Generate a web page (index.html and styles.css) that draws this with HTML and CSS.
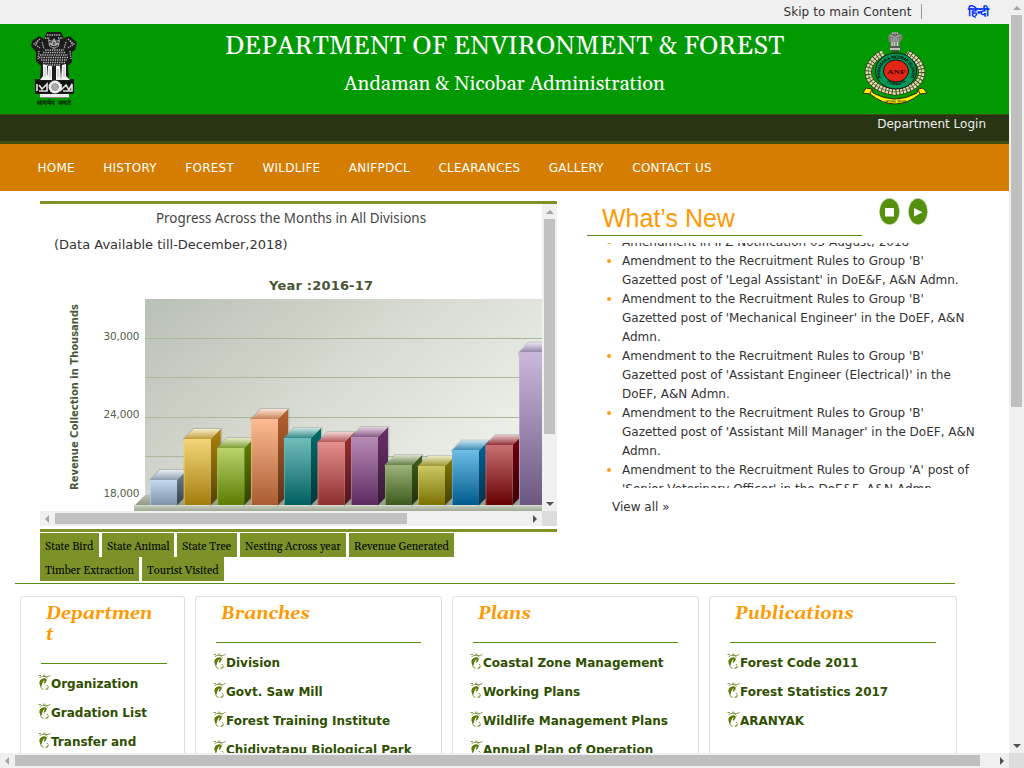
FILE: index.html
```html
<!DOCTYPE html>
<html lang="en">
<head>
<meta charset="utf-8">
<title>Department of Environment &amp; Forest</title>
<link rel="stylesheet" href="styles.css">
</head>
<body>
<svg class="defs" width="0" height="0" aria-hidden="true">
  <symbol id="leaf" viewBox="0 0 13 17">
    <path d="M.5 1.500H3M5 1.200H7.500M7 2.500Q10 3 12.500 1.500M1.500 3.800Q4 1.500 7 2.600 9 3.200 9.500 4.500" fill="none" stroke="#8c9a52" stroke-width="1"/>
    <path d="M2.800 9C2 12 3 14.500 5.500 15.500M7.500 15.500Q10.500 15 10.300 12.500M8.800 11.500H10" fill="none" stroke="#8c9a3c" stroke-width="1.100"/>
    <path d="M3.500 12.500C0 10 .8 5 6 4.300 9.500 4 9.800 7 6.500 9.800L5.500 9C7.500 6.500 6.500 5.500 5 8 4 9.800 4 11 3.500 12.500Z" fill="#5d7a08"/>
  </symbol>
  <symbol id="lions" viewBox="0 0 48 75">
    <path d="M17 1H31L34 7 40 5 47 12 45 19 42 21 42 31 38 35 39 48H44V63H39V67H10V63H5V48H10L11 35 6 30 6 21 1 15 2 10 9 5 14 8Z" fill="#1c1c1c"/>
    <g fill="none" stroke="#b4b4b4" stroke-width="1.300" stroke-dasharray="1.400 .9">
      <path d="M17 4H31M15 7H20M28 7H33M10 8L4 13 10 17M38 8L44 13 38 17M12 11L14 18M36 11L34 18M8 10L6 14M40 10L43 14M15 19H34M13 21.500H36M10 24H38M9 26.500H39M11 29H37M13 31.500H36M17 34H31M9 20L8 28M40 20L41 28"/>
    </g>
    <path d="M18 8L22 10 24 7 26 10 30 8 29 15 24 18 19 15Z" fill="#a8a8a8"/><path d="M19 11H22M26 11H29M20 14Q24 18 28 14M24 11V14" stroke="#111" fill="none"/>
    <path d="M13 33L17 34 17 44 19 49H10L13 45ZM18 35H22L22 49H17ZM26 35H30L31 49H26ZM32 34L36 33 36 45 40 49H31Z" fill="#f2f2f2"/>
    <path d="M15 36V46M34 36V46M20 38V46M28 38V46" stroke="#bbb"/>
    <rect x="5" y="50" width="39" height="12" rx="2" fill="#111"/>
    <path d="M7 53V60M9 54L12 58 17 53V60H9M31 53V59L36 54 39 59 42 53V60H33" fill="none" stroke="#ddd" stroke-width="1.700"/>
    <circle cx="25" cy="56" r="6.500" fill="#eee"/><circle cx="25" cy="56" r="3.500" fill="#aaa" stroke="#777" stroke-dasharray="1 1"/>
    <rect x="10" y="63" width="29" height="3.500" fill="#eee"/>
  </symbol>
  <symbol id="capital" viewBox="0 0 16 22">
    <path d="M5 1H11L12 3 15 3 15.500 7 14 10 12 12 13 15V20H3V15L4 12 1.500 10 1 6 2 3 4 3Z" fill="#777d75"/>
    <path d="M5 2H11M3 5H6M10 5H13M6 5L8 7 10 5M4 8H12M4 10H12" fill="none" stroke="#c4c4be" stroke-dasharray="1.500 .8"/>
    <path d="M5 11V15M7.500 11V15M10.500 11V15M3 18H13" stroke="#d8d8d0" stroke-width="1.300"/>
    <path d="M3 16H13M4 20H12M6 4H7M9 4H10" stroke="#333"/>
  </symbol>
</svg>

<div class="window">
  <div class="page">
    <div class="topbar"><a class="skip">Skip to main Content</a><a class="hindi">हिन्दी</a></div>
    <header class="banner">
      <svg class="emblem" width="50" height="78" viewBox="0 0 50 78">
        <use href="#lions" x="0" y="0" width="48" height="75"/>
        <text x="7" y="74" textLength="34" lengthAdjust="spacingAndGlyphs" font-size="6.500" font-weight="bold" fill="#0a200a">सत्यमेव जयते</text>
      </svg>
      <div class="titles"><h1>DEPARTMENT OF ENVIRONMENT &amp; FOREST</h1><h2>Andaman &amp; Nicobar Administration</h2></div>
      <svg class="crest" width="66" height="75" viewBox="0 0 66 75">
        <use href="#capital" x="25" y="0" width="16" height="22"/>
        <path d="M21 22C-2 34 2 58 33 61C64 58 68 34 45 22" fill="none" stroke="#32401f" stroke-width="7"/>
        <path d="M21 22C-2 34 2 58 33 61C64 58 68 34 45 22" fill="none" stroke="#e0dcae" stroke-width="5.500" stroke-dasharray="2.600 .9"/>
        <path d="M21 22C-2 34 2 58 33 61C64 58 68 34 45 22" fill="none" stroke="#5b6238" stroke-width=".8"/>
        <ellipse cx="34" cy="40" rx="20.500" ry="18" fill="#00965a" stroke="#101810"/>
        <ellipse cx="34" cy="40" rx="12.500" ry="11" fill="#e32615" stroke="#101810"/>
        <path id="arc" d="M19 47A16 14.500 0 1 1 49 47" fill="none"/>
        <path id="low" d="M20 46A16 15.500 0 0 0 48 46" fill="none"/>
        <text font-size="4.200" font-weight="bold" fill="#062010"><textPath href="#arc" textLength="58">ANDAMAN &amp; NICOBAR ISLANDS</textPath></text>
        <text font-size="4" font-weight="bold" fill="#062010"><textPath href="#low" startOffset="7">FORESTS</textPath></text>
        <text x="25" y="42.500" textLength="18.500" lengthAdjust="spacingAndGlyphs" font-family="Liberation Serif" font-size="7" font-weight="bold" fill="#300">ANF</text>
        <path d="M.8 62L4 57 10 58 11 62Q33 74 55 62L56 58 61 57 65 62 58 63Q33 83 8 63Z" fill="#ffed00" stroke="#332c00"/>
        <path d="M10 58L8 63M56 58L58 63" stroke="#332c00"/>
        <text x="23" y="71.500" font-size="4.500" textLength="21" lengthAdjust="spacingAndGlyphs" fill="#222">अरण्यमेव जीवनम्</text>
      </svg>
    </header>
    <div class="login"><a>Department Login</a></div>
    <nav class="menu"><a>HOME</a><a>HISTORY</a><a>FOREST</a><a>WILDLIFE</a><a>ANIFPDCL</a><a>CLEARANCES</a><a>GALLERY</a><a>CONTACT US</a></nav>

    <main class="main">
      <section class="stats">
        <div class="frame">
          <div class="pane">
            <h3>Progress Across the Months in All Divisions</h3>
            <p class="avail">(Data Available till-December,2018)</p>
            <svg class="chart" id="chart" width="502" height="241" viewBox="40 270 502 241">
              <defs>
                <linearGradient id="wall" x1="0" y1="0" x2="1" y2=".6"><stop offset="0" stop-color="#b9c0b5"/><stop offset=".5" stop-color="#d5d9cf"/><stop offset="1" stop-color="#edf0ea"/></linearGradient>
                <linearGradient id="slab" x1="0" y1="0" x2="0" y2="1"><stop offset="0" stop-color="#cbd2c3"/><stop offset="1" stop-color="#a0a994"/></linearGradient>
                <linearGradient id="floor" x1="0" y1="0" x2="0" y2="1"><stop offset="0" stop-color="#b8bfb1"/><stop offset="1" stop-color="#8e967f"/></linearGradient>
              </defs>
              <text class="year" x="269" y="290" textLength="104">Year :2016-17</text>
              <text class="axis" transform="translate(77.500 490) rotate(-90)" textLength="186" lengthAdjust="spacingAndGlyphs">Revenue Collection in Thousands</text>
              <g class="tick"><text x="103.500" y="340" textLength="36">30,000</text><text x="103.500" y="418" textLength="36">24,000</text><text x="103.500" y="497" textLength="36">18,000</text></g>
              <rect x="145" y="299" width="397" height="197" fill="url(#wall)"/>
              <path d="M145 338.500H542M145 377.500H542M145 417.500H542M145 456.500H542" stroke="#a9b998"/>
              <path d="M145 495H542V506H134Z" fill="url(#floor)"/>
              <rect x="134" y="505" width="408" height="6" fill="url(#slab)"/>
              <path d="M134 505.500H542" stroke="#d8ddd2"/>
              <g id="bars"></g>
            </svg>
          </div>
          <div class="vbar"><i class="up off"></i><b></b><i class="down"></i></div>
          <div class="hbar"><i class="left off"></i><b></b><i class="right"></i></div>
          <div class="corner"></div>
        </div>
        <div class="tabs"><a style="width:59px">State Bird</a><a style="width:72px">State Animal</a><a style="width:60px">State Tree</a><a style="width:106px">Nesting Across year</a><a style="width:105px">Revenue Generated</a><a style="width:99px">Timber Extraction</a><a style="width:82px">Tourist Visited</a></div>
      </section>
      <section class="news">
        <div class="newshead">
          <h2>What’s New</h2>
          <svg class="controls" width="50" height="28" viewBox="0 0 50 28"><g fill="#56900f" stroke="#b9d094" stroke-width=".8" stroke-dasharray="1.500 1"><ellipse cx="10.500" cy="13.500" rx="10" ry="13"/><ellipse cx="39" cy="13.500" rx="9.500" ry="13"/></g><path d="M6 10H15V18.500H6ZM35 10L43.500 14.200 35 18.500Z" fill="#fff"/></svg>
        </div>
        <div class="ticker"><ul>
          <li>Amendment in IPZ Notification 05 August, 2018</li>
          <li>Amendment to the Recruitment Rules to Group 'B'<br>Gazetted post of 'Legal Assistant' in DoE&amp;F, A&amp;N Admn.</li>
          <li>Amendment to the Recruitment Rules to Group 'B'<br>Gazetted post of 'Mechanical Engineer' in the DoEF, A&amp;N<br>Admn.</li>
          <li>Amendment to the Recruitment Rules to Group 'B'<br>Gazetted post of 'Assistant Engineer (Electrical)' in the<br>DoEF, A&amp;N Admn.</li>
          <li>Amendment to the Recruitment Rules to Group 'B'<br>Gazetted post of 'Assistant Mill Manager' in the DoEF, A&amp;N<br>Admn.</li>
          <li>Amendment to the Recruitment Rules to Group 'A' post of<br>'Senior Veterinary Officer' in the DoE&amp;F, A&amp;N Admn.</li>
        </ul></div>
        <a class="viewall">View all »</a>
      </section>
    </main>
    <section class="cards">
      <article><h2>Departmen<br>t</h2><ul><li><svg><use href="#leaf"/></svg>Organization</li><li><svg><use href="#leaf"/></svg>Gradation List</li><li><svg><use href="#leaf"/></svg>Transfer and</li></ul></article>
      <article><h2>Branches</h2><ul><li><svg><use href="#leaf"/></svg>Division</li><li><svg><use href="#leaf"/></svg>Govt. Saw Mill</li><li><svg><use href="#leaf"/></svg>Forest Training Institute</li><li><svg><use href="#leaf"/></svg>Chidiyatapu Biological Park</li></ul></article>
      <article><h2>Plans</h2><ul><li><svg><use href="#leaf"/></svg>Coastal Zone Management</li><li><svg><use href="#leaf"/></svg>Working Plans</li><li><svg><use href="#leaf"/></svg>Wildlife Management Plans</li><li><svg><use href="#leaf"/></svg>Annual Plan of Operation</li></ul></article>
      <article><h2>Publications</h2><ul><li><svg><use href="#leaf"/></svg>Forest Code 2011</li><li><svg><use href="#leaf"/></svg>Forest Statistics 2017</li><li><svg><use href="#leaf"/></svg>ARANYAK</li></ul></article>
    </section>
  </div>
  <div class="vbar page-v"><i class="up off"></i><b></b><i class="down"></i></div>
  <div class="hbar page-h"><i class="left off"></i><b></b><i class="right"></i></div>
  <div class="corner"></div>
</div>
<script src="chart.js"></script>
</body>
</html>
```
FILE: styles.css
```css
* { box-sizing: border-box; }
body { margin: 0; font: 12px/19px Verdana, "DejaVu Sans", sans-serif; color: #333; background: #fff; overflow: hidden; }
h1, h2, h3, p, ul { margin: 0; padding: 0; font-weight: normal; }
ul { list-style: none; }
.defs { display: block; }
.window { width: 1024px; height: 768px; display: grid; grid-template: 753px 15px / 1009px 15px; overflow: hidden; }
.page { overflow: hidden; display: flex; flex-direction: column; }
.page > * { flex: none; }

.topbar { height: 24px; background: #f0f0f0; display: flex; padding-left: 783.5px; }
.skip { width: 138.5px; height: 15px; margin-top: 4px; line-height: 17px; letter-spacing: .06px; border-right: 1px solid #999; white-space: nowrap; }
.hindi { margin: 3px 0 0 46px; line-height: 18px; font-weight: bold; color: #0030ff; }
.banner { height: 90px; background: #009900; color: #fff; display: flex; align-items: flex-start; padding: 7px 0 0 30px; }
.emblem { width: 50px; flex: none; }
.titles { flex: none; width: 849px; margin-right: -67px; text-align: center; font-family: Georgia, Gelasio, "DejaVu Serif", serif; white-space: nowrap; }
.titles h1 { font-size: 26px; line-height: 30px; padding-top: 1px; }
.titles h2 { font-size: 20px; line-height: 24px; margin-top: 10px; }
.crest { flex: none; }
.login { height: 30px; background: #283413; border-top: 1px solid #3b5010; border-bottom: 3px solid #3b5010; text-align: right; padding-right: 23px; color: #eee; }
.menu { height: 47px; background: #d57d00; color: #fff; display: flex; gap: 28.4px; letter-spacing: .25px; padding: 15px 0 0 37.5px; white-space: nowrap; }

.main { height: 392px; display: flex; padding: 10px 0 0 40px; }
.stats { width: 517px; }
.frame { height: 331px; border-top: 3px solid #7c9228; border-bottom: 3px solid #7c9228; display: grid; grid-template: 307px 15px / 502px 15px; }
.pane { overflow: hidden; }
.pane h3 { font: 15px/20px "Trebuchet MS", "Noto Sans", sans-serif; text-align: center; padding-top: 3px; color: #444; transform: scaleX(.895); }
.avail { font-size: 13px; line-height: 20px; margin-top: 8px; padding-left: 14px; }
.chart { display: block; margin-top: 15px; }
.year { font: bold 13px Verdana, "DejaVu Sans", sans-serif; fill: #475636; }
.axis { font: bold 10px Verdana, "DejaVu Sans", sans-serif; fill: #475636; }
.tick { font: 10.5px Verdana, "DejaVu Sans", sans-serif; fill: #53614a; }
.tabs { display: flex; flex-wrap: wrap; column-gap: 3px; padding-top: 1px; width: 460px; }
.tabs a { height: 24px; line-height: 28px; padding-left: 5px; background: #7c9228; color: #000; font-family: Georgia, Gelasio, "DejaVu Serif", serif; font-size: 11px; white-space: nowrap; letter-spacing: -.02px; }

.news { width: 400px; margin-left: 30px; }
.newshead { display: flex; gap: 17px; height: 35px; margin-top: -3px; }
.newshead h2 { width: 275px; height: 38px; padding: 2px 0 0 15px; border-bottom: 1px solid #56900f; font: 25px/36px "Liberation Sans", Arial, sans-serif; color: #ff9900; }
.controls { flex: none; }
.ticker { height: 245px; margin-top: 10px; overflow: hidden; }
.ticker ul { margin-top: -10px; padding-left: 35px; }
.ticker li { white-space: nowrap; }
.ticker li::before { content: ""; float: left; width: 4px; height: 4px; margin: 7px 0 0 -15px; border-radius: 50%; background: #ff9d1c; }
.viewall { display: block; margin: 10px 0 0 25px; }

.cards { width: 940px; margin-left: 15px; border-top: 1px solid #56900f; padding: 12px 0 0 5px; display: flex; gap: 10px; }
.cards article { flex: none; width: 247px; height: 240px; border: 1px solid #ddd; border-radius: 3px; padding: 6px 20px 0; }
.cards article:first-child { width: 165px; padding-right: 17px; }
.cards article:last-child { width: 248px; }
.cards h2 { font: italic bold 18px/21px Georgia, Gelasio, "DejaVu Serif", serif; color: #ff9900; padding: 0 0 18px 5px; border-bottom: 1px solid #56900f; white-space: nowrap; }
.cards li { display: flex; height: 29px; line-height: 21px; font-weight: bold; color: #2f4f00; white-space: nowrap; margin-left: -3px; }
.cards ul { padding-top: 10px; }
.cards svg { width: 13px; height: 17px; flex: none; }

.vbar, .hbar { display: flex; align-items: center; background: #f0f0f0; }
.vbar { flex-direction: column; }
.vbar b { width: 11px; height: 215px; background: #c1c1c1; margin-top: 9px; }
.hbar b { height: 11px; width: 352px; background: #c1c1c1; margin-left: 6px; }
.page-v b { height: 392px; background: #bfbfbf; }
.page-h b { width: 965px; background: #bfbfbf; }
.vbar i, .hbar i { width: 0; height: 0; border: 4px solid transparent; flex: none; }
.up { margin-top: 2px; }
.vbar .up { border-bottom-color: #a3a3a3; margin-bottom: -4px; }
.vbar .down { border-top-color: #505050; margin-top: auto; margin-bottom: 1px; }
.hbar .left { border-right-color: #a3a3a3; margin-left: 1px; }
.hbar .right { border-left-color: #505050; margin-left: auto; margin-right: 1px; }
.corner { background: #dcdcdc; }
```
FILE: chart.js
```js
// Monthly revenue columns: left edge, top edge, light face, dark face, side colour.
const columns = [
  [150, 480, '#c3d9ee', '#7d93a8', '#6f8296'],
  [183.7, 439, '#f5d679', '#a37c0d', '#ae830b'],
  [217.2, 448, '#bad46c', '#5a7d02', '#5e8500'],
  [251, 419, '#ffbb94', '#a95c30', '#b7622d'],
  [284, 438, '#72bdbb', '#005f5f', '#006d6b'],
  [317.6, 442, '#e58f90', '#8e2d2e', '#9d2e30'],
  [351, 437, '#b78cb5', '#5d2b61', '#6a3169'],
  [385, 465, '#9db37c', '#3d5b1c', '#416019'],
  [418, 466, '#cdc865', '#7a7100', '#857d00'],
  [452, 450.5, '#6dbce5', '#005b8d', '#006598'],
  [485.5, 445, '#c87073', '#650002', '#760008'],
  [519, 352.5, '#c9b8dc', '#6b5780', '#796591']
];
const ns = 'http://www.w3.org/2000/svg';
const group = document.getElementById('bars');
const add = (parent, tag, attrs) => {
  const el = document.createElementNS(ns, tag);
  for (const k in attrs) el.setAttribute(k, attrs[k]);
  parent.appendChild(el);
  return el;
};
const gradient = (id, from, to, x2 = 0) => {
  const g = add(group, 'linearGradient', { id, x1: 0, y1: 0, x2, y2: 1 });
  add(g, 'stop', { offset: 0, 'stop-color': from });
  add(g, 'stop', { offset: 1, 'stop-color': to });
};
const mix = (hex, target, t) => '#' + [1, 3, 5].map(i =>
  Math.round(parseInt(hex.substr(i, 2), 16) * (1 - t) + target * t).toString(16).padStart(2, '0')).join('');
columns.forEach(([x, y, light, dark, side], i) => {
  const r = x + 27;
  gradient('f' + i, light, dark);
  gradient('s' + i, side, mix(side, 0, 0.5));
  gradient('t' + i, mix(light, 255, 0.6), mix(side, 255, 0.2));
  add(group, 'path', { d: `M${x} ${y}L${x + 10} ${y - 10}H${r + 10.5}V495L${r} 505Z`, fill: 'none', stroke: '#777', 'stroke-opacity': 0.3, 'stroke-width': 2 });
  add(group, 'path', { d: `M${r} ${y}L${r + 10} ${y - 10}V495L${r} 505Z`, fill: `url(#s${i})` });
  add(group, 'path', { d: `M${x} ${y}L${x + 10} ${y - 10}H${r + 10}L${r} ${y}Z`, fill: `url(#t${i})` });
  add(group, 'rect', { x, y, width: 27, height: 505 - y, fill: `url(#f${i})` });
  add(group, 'path', { d: `M${x + .5} 505V${y + .5}H${r}`, fill: 'none', stroke: light, 'stroke-opacity': 0.6 });
});
```
